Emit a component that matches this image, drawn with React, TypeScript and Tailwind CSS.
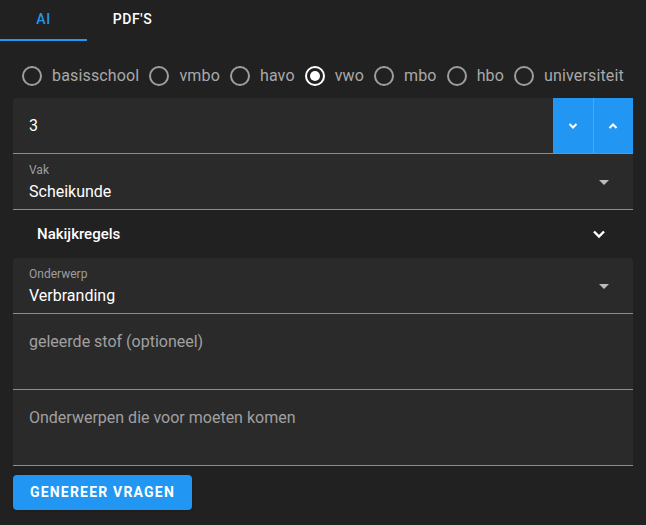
import React from "react";

const levels = ["basisschool", "vmbo", "havo", "vwo", "mbo", "hbo", "universiteit"];

const Radio = ({ checked, label }: { checked: boolean; label: string }) => (
  <label className="flex items-center gap-[10px]">
    <span
      className={
        "flex h-5 w-5 items-center justify-center rounded-full border-2 " +
        (checked ? "border-white" : "border-[#9e9e9e]")
      }
    >
      {checked && <span className="h-[10px] w-[10px] rounded-full bg-white" />}
    </span>
    <span className="text-[16px] tracking-[0.15px] text-[#a9a9a9]">{label}</span>
  </label>
);

const DropArrow = () => (
  <svg width="24" height="24" viewBox="0 0 24 24" className="text-[#bdbdbd]">
    <path d="M7 10l5 5 5-5z" fill="currentColor" />
  </svg>
);

const SelectField = ({ label, value, rounded }: { label: string; value: string; rounded?: boolean }) => (
  <div
    className={
      "flex h-[56px] items-center justify-between border-b border-[#8c8c8c] bg-[#2a2a2a] pl-4 pr-[17px] " +
      (rounded ? "rounded-t" : "")
    }
  >
    <div className="flex flex-col pt-[1px]">
      <span className="text-[12px] leading-[14px] text-[#9e9e9e]">{label}</span>
      <span className="mt-[5px] text-[16px] leading-[19px] text-white">{value}</span>
    </div>
    <DropArrow />
  </div>
);

const TextArea = ({ placeholder }: { placeholder: string }) => (
  <div className="h-[76px] border-b border-[#8c8c8c] bg-[#2a2a2a] px-4 pt-[16px]">
    <span className="text-[16px] leading-[19px] text-[#a0a0a0]">{placeholder}</span>
  </div>
);

export default function App() {
  return (
    <div
      className="flex h-[525px] w-[646px] flex-col bg-[#212121] text-white"
      style={{ fontFamily: "Roboto, 'Liberation Sans', sans-serif" }}
    >
      {/* Tabs */}
      <div className="flex h-[41px]">
        <div className="flex w-[87px] flex-col items-center justify-between">
          <span className="pt-[9px] text-[14px] font-medium uppercase tracking-[0.6px] text-[#2196f3]">AI</span>
          <span className="h-[2px] w-full bg-[#2196f3]" />
        </div>
        <div className="flex w-[91px] justify-center">
          <span className="pt-[9px] text-[14px] font-medium uppercase tracking-[0.6px] text-white">PDF'S</span>
        </div>
      </div>

      <div className="flex flex-col px-[13px]">
        {/* Levels */}
        <div className="flex h-[57px] items-center justify-center gap-[10px] pt-[16px] pb-[4px]">
          {levels.map((l) => (
            <Radio key={l} label={l} checked={l === "vwo"} />
          ))}
        </div>

        {/* Number */}
        <div className="flex h-[56px] rounded-t border-b border-[#8c8c8c] bg-[#2a2a2a]">
          <div className="flex flex-1 items-center pl-4 text-[16px]">3</div>
          <div className="flex w-[80px] bg-[#2196f3]">
            <div className="flex flex-1 items-center justify-center border-r border-[#4aa8f5]">
              <svg width="10" height="8" viewBox="0 0 10 8">
                <path d="M1.5 2l3.5 3.5L8.5 2" stroke="white" strokeWidth="2" fill="none" />
              </svg>
            </div>
            <div className="flex flex-1 items-center justify-center">
              <svg width="10" height="8" viewBox="0 0 10 8">
                <path d="M1.5 6L5 2.5 8.5 6" stroke="white" strokeWidth="2" fill="none" />
              </svg>
            </div>
          </div>
        </div>

        <SelectField label="Vak" value="Scheikunde" />

        {/* Nakijkregels */}
        <div className="flex h-[48px] items-center justify-between pl-6 pr-[27px]">
          <span className="text-[15px] font-medium">Nakijkregels</span>
          <svg width="14" height="10" viewBox="0 0 14 10">
            <path d="M2 2.5l5 5 5-5" stroke="white" strokeWidth="2.4" fill="none" />
          </svg>
        </div>

        <SelectField label="Onderwerp" value="Verbranding" rounded />
        <TextArea placeholder="geleerde stof (optioneel)" />
        <TextArea placeholder="Onderwerpen die voor moeten komen" />

        <div className="pt-[9px]">
          <button className="flex h-[35px] w-[179px] items-center justify-center rounded bg-[#2196f3] text-[14px] font-bold uppercase tracking-[1.2px] text-white shadow">
            Genereer vragen
          </button>
        </div>
      </div>
    </div>
  );
}
